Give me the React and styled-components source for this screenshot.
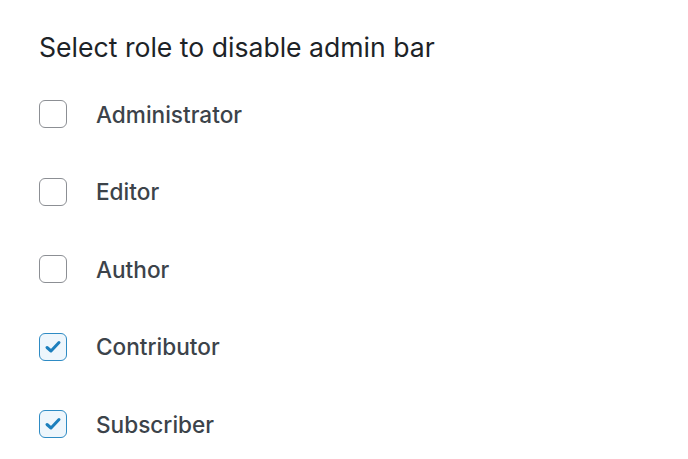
import React from "react";
import styled, { createGlobalStyle } from "styled-components";

const Global = createGlobalStyle`
  html, body { margin: 0; padding: 0; background: #fff; }
  body { font-family: Inter, "Noto Sans", sans-serif; }
`;

const Page = styled.div`
  padding: 29px 39px;
`;

const Title = styled.h2`
  margin: 0 0 35px;
  font-size: 26.6px;
  font-weight: 400;
  color: #1d2327;
  line-height: 36px;
`;

const List = styled.div`
  display: flex;
  flex-direction: column;
  gap: 49.5px;
`;

const Row = styled.label`
  display: flex;
  align-items: center;
  gap: 29px;
  height: 28px;
`;

const Box = styled.span`
  box-sizing: border-box;
  width: 28px;
  height: 28px;
  border-radius: 6px;
  border: 1px solid ${(p) => (p.$checked ? "#2e8bc4" : "#8c8f94")};
  background: ${(p) => (p.$checked ? "#eef6fc" : "#fff")};
  display: flex;
  align-items: center;
  justify-content: center;
  flex: none;
`;

const Label = styled.span`
  font-size: 22.6px;
  font-weight: 500;
  color: #3c434a;
`;

const roles = [
  ["Administrator", false],
  ["Editor", false],
  ["Author", false],
  ["Contributor", true],
  ["Subscriber", true],
];

export default function App() {
  return (
    <>
      <Global />
      <Page>
        <Title>Select role to disable admin bar</Title>
        <List>
          {roles.map(([name, checked]) => (
            <Row key={name}>
              <Box $checked={checked}>
                {checked && (
                  <svg width="20" height="20" viewBox="0 0 20 20">
                    <path d="M4 10.5 L8 14 L16 5.5" fill="none" stroke="#1c7fbd" strokeWidth="3" strokeLinecap="round" strokeLinejoin="round" />
                  </svg>
                )}
              </Box>
              <Label>{name}</Label>
            </Row>
          ))}
        </List>
      </Page>
    </>
  );
}
